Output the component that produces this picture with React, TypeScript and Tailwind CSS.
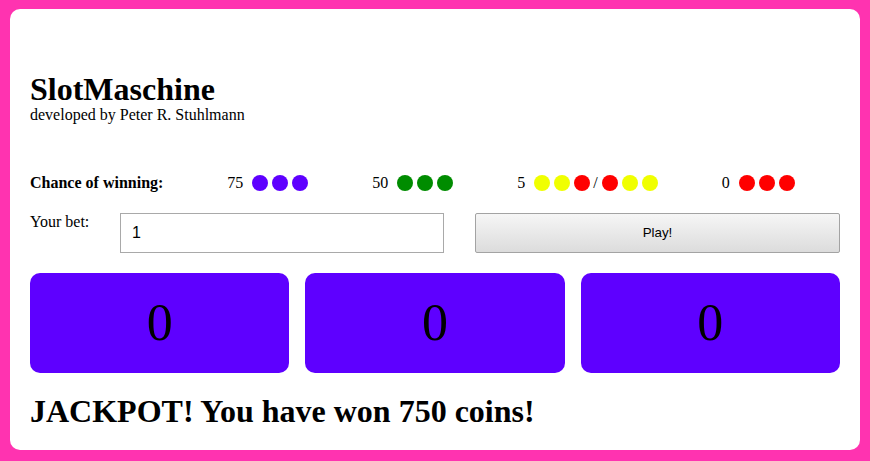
type Combo = {
  id: string;
  payout: number;
  dots: string[][];
};

const PURPLE = "bg-[#5e00ff]";
const GREEN = "bg-[#008c00]";
const YELLOW = "bg-[#f0ff00]";
const RED = "bg-[#ff0000]";

const COMBOS: Combo[] = [
  { id: "c1", payout: 75, dots: [[PURPLE, PURPLE, PURPLE]] },
  { id: "c2", payout: 50, dots: [[GREEN, GREEN, GREEN]] },
  {
    id: "c3",
    payout: 5,
    dots: [
      [YELLOW, YELLOW, RED],
      [RED, YELLOW, YELLOW],
    ],
  },
  { id: "c4", payout: 0, dots: [[RED, RED, RED]] },
];

const REELS = [0, 0, 0];

function Dot({ color, first }: { color: string; first?: boolean }) {
  return (
    <span
      className={`inline-block w-4 h-4 rounded-full ${color} ${first ? "ml-0" : "ml-1"}`}
    />
  );
}

function ComboItem({ combo }: { combo: Combo }) {
  return (
    <div className="flex items-center">
      <span className="mr-[9px]">{combo.payout}</span>
      {combo.dots.map((set, si) => (
        <div key={si} className="flex items-center">
          {si > 0 ? <span className="ml-[3px]">/</span> : null}
          {set.map((c, i) => (
            <Dot key={i} color={c} first={i === 0 && si === 0} />
          ))}
        </div>
      ))}
    </div>
  );
}

function SlotMachine() {
  return (
    <div className="h-[461px] bg-[#ff33b0] pt-[9px] pb-[11px] px-[10px] font-['Liberation_Serif',serif] text-black">
      <div className="h-full bg-white rounded-[10px] px-[20px] pt-[63px]">
        <h1 className="text-[32px] font-bold leading-[34px]">SlotMaschine</h1>
        <p className="text-[16px] leading-[18px]">developed by Peter R. Stuhlmann</p>

        <div className="mt-[47px] h-[24px] flex items-center gap-[64px] text-[16px] leading-[18px]">
          <span className="font-bold">Chance of winning:</span>
          {COMBOS.map((combo) => (
            <ComboItem key={combo.id} combo={combo} />
          ))}
        </div>

        <div className="mt-[18px] flex items-start">
          <span className="w-[90px] text-[16px] leading-[16px] pt-[1px]">Your bet:</span>
          <input
            type="number"
            defaultValue={1}
            className="w-[324px] h-[40px] border border-[#a9a9a9] px-[11px] font-['Liberation_Sans',Arial,sans-serif] text-[16px] outline-none [appearance:textfield] [&::-webkit-inner-spin-button]:appearance-none"
          />
          <button className="ml-[31px] w-[365px] h-[40px] border border-[#a3a3a3] rounded-[2px] bg-gradient-to-b from-[#f6f6f6] to-[#dcdcdc] font-['Liberation_Sans',Arial,sans-serif] text-[13.33px] text-black">
            Play!
          </button>
        </div>

        <div className="mt-[20px] grid grid-cols-3 gap-[16px]">
          {REELS.map((v, i) => (
            <div
              key={i}
              className="h-[100px] rounded-[10px] bg-[#5e00ff] flex items-center justify-center text-[52px] leading-none"
            >
              {v}
            </div>
          ))}
        </div>

        <h2 className="mt-[20px] text-[32px] font-bold leading-[36px]">
          JACKPOT! You have won 750 coins!
        </h2>
      </div>
    </div>
  );
}

export default SlotMachine;
